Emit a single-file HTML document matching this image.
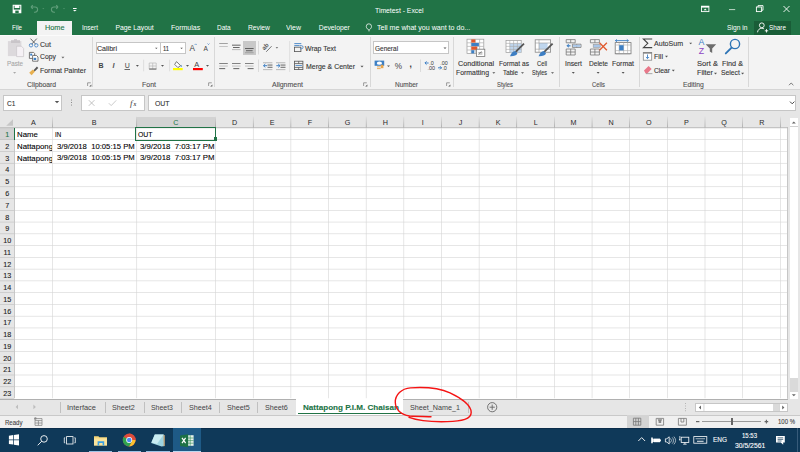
<!DOCTYPE html>
<html><head><meta charset="utf-8"><title>Timetest - Excel</title>
<style>
html,body{margin:0;padding:0;width:800px;height:452px;overflow:hidden;background:#fff}
body{position:relative;font-family:"Liberation Sans",sans-serif}
.r{position:absolute}
.t{position:absolute;white-space:nowrap;line-height:1;transform-origin:0 0;-webkit-text-stroke:0.1px currentColor}
.clip{position:absolute;overflow:hidden}
svg.ov{position:absolute;left:0;top:0}
</style></head><body>
<div class="r" style="left:0px;top:0px;width:800px;height:35px;background:#217346;"></div>
<div class="r" style="left:37px;top:20.5px;width:35px;height:14.5px;background:#f3f3f3;"></div>
<div class="r" style="left:753.5px;top:21px;width:37px;height:13.5px;background:#195d37;"></div>
<span class="t" style="left:375.00px;top:8.00px;font-size:6.8px;color:#ffffff;-webkit-text-stroke:0">Timetest - Excel</span>
<span class="t" style="left:12.00px;top:25.00px;font-size:6.8px;color:#ffffff;transform:scaleX(0.913);-webkit-text-stroke:0">File</span>
<span class="t" style="left:82.00px;top:25.00px;font-size:6.8px;color:#ffffff;transform:scaleX(0.941);-webkit-text-stroke:0">Insert</span>
<span class="t" style="left:115.50px;top:25.00px;font-size:6.8px;color:#ffffff;-webkit-text-stroke:0">Page Layout</span>
<span class="t" style="left:170.75px;top:25.00px;font-size:6.8px;color:#ffffff;transform:scaleX(1.032);-webkit-text-stroke:0">Formulas</span>
<span class="t" style="left:216.75px;top:25.00px;font-size:6.8px;color:#ffffff;transform:scaleX(0.954);-webkit-text-stroke:0">Data</span>
<span class="t" style="left:247.50px;top:25.00px;font-size:6.8px;color:#ffffff;transform:scaleX(0.983);-webkit-text-stroke:0">Review</span>
<span class="t" style="left:286.00px;top:25.00px;font-size:6.8px;color:#ffffff;transform:scaleX(1.021);-webkit-text-stroke:0">View</span>
<span class="t" style="left:318.75px;top:25.00px;font-size:6.8px;color:#ffffff;-webkit-text-stroke:0">Developer</span>
<span class="t" style="left:376.80px;top:25.00px;font-size:6.8px;color:#ffffff;transform:scaleX(1.041);-webkit-text-stroke:0">Tell me what you want to do...</span>
<span class="t" style="left:726.50px;top:25.00px;font-size:6.8px;color:#ffffff;transform:scaleX(0.985);-webkit-text-stroke:0">Sign in</span>
<span class="t" style="left:769.00px;top:25.00px;font-size:6.8px;color:#ffffff;transform:scaleX(0.936);-webkit-text-stroke:0">Share</span>
<span class="t" style="left:44.50px;top:25.00px;font-size:6.8px;color:#217346;transform:scaleX(1.074);">Home</span>
<div class="r" style="left:0px;top:35px;width:800px;height:54px;background:#f3f3f3;"></div>
<div class="r" style="left:0px;top:35px;width:800px;height:1px;background:#fbfbfb;"></div>
<div class="r" style="left:0px;top:88.5px;width:800px;height:1px;background:#d5d5d5;"></div>
<div class="r" style="left:92px;top:37px;width:0.8px;height:50px;background:#d8d8d8;"></div>
<div class="r" style="left:214.4px;top:37px;width:0.8px;height:50px;background:#d8d8d8;"></div>
<div class="r" style="left:369.9px;top:37px;width:0.8px;height:50px;background:#d8d8d8;"></div>
<div class="r" style="left:453px;top:37px;width:0.8px;height:50px;background:#d8d8d8;"></div>
<div class="r" style="left:558.6px;top:37px;width:0.8px;height:50px;background:#d8d8d8;"></div>
<div class="r" style="left:638.7px;top:37px;width:0.8px;height:50px;background:#d8d8d8;"></div>
<div class="r" style="left:748px;top:37px;width:0.8px;height:50px;background:#d8d8d8;"></div>
<span class="t" style="left:27.00px;top:82.00px;font-size:6.8px;color:#505050;">Clipboard</span>
<span class="t" style="left:142.00px;top:82.00px;font-size:6.8px;color:#505050;transform:scaleX(1.029);">Font</span>
<span class="t" style="left:272.00px;top:82.00px;font-size:6.8px;color:#505050;transform:scaleX(1.024);">Alignment</span>
<span class="t" style="left:395.00px;top:82.00px;font-size:6.8px;color:#505050;transform:scaleX(0.950);">Number</span>
<span class="t" style="left:497.00px;top:82.00px;font-size:6.8px;color:#505050;transform:scaleX(0.865);">Styles</span>
<span class="t" style="left:592.00px;top:82.00px;font-size:6.8px;color:#505050;transform:scaleX(0.861);">Cells</span>
<span class="t" style="left:683.00px;top:82.00px;font-size:6.8px;color:#505050;">Editing</span>
<span class="t" style="left:7.00px;top:61.00px;font-size:6.8px;color:#a6a6a6;transform:scaleX(0.919);">Paste</span>
<span class="t" style="left:40.00px;top:42.00px;font-size:6.8px;color:#333333;transform:scaleX(1.037);">Cut</span>
<span class="t" style="left:40.00px;top:54.00px;font-size:6.8px;color:#333333;">Copy</span>
<span class="t" style="left:40.00px;top:68.00px;font-size:6.8px;color:#333333;transform:scaleX(1.023);">Format Painter</span>
<div class="r" style="left:95.5px;top:41.6px;width:90.1px;height:12.9px;background:#fff;box-sizing:border-box;border:1px solid #c6c6c6"></div>
<div class="r" style="left:160.3px;top:42px;width:0.8px;height:12px;background:#c6c6c6;"></div>
<span class="t" style="left:97.00px;top:46.00px;font-size:6.8px;color:#333;transform:scaleX(1.039);">Calibri</span>
<span class="t" style="left:163.00px;top:46.00px;font-size:6.8px;color:#333;transform:scaleX(0.848);">11</span>
<div class="r" style="left:372.5px;top:41.3px;width:76.8px;height:13.2px;background:#fff;box-sizing:border-box;border:1px solid #c6c6c6"></div>
<span class="t" style="left:374.50px;top:46.00px;font-size:6.8px;color:#333;transform:scaleX(0.954);">General</span>
<span class="t" style="left:305.00px;top:46.00px;font-size:6.8px;color:#333333;transform:scaleX(1.020);">Wrap Text</span>
<span class="t" style="left:306.00px;top:64.00px;font-size:6.8px;color:#333333;transform:scaleX(1.021);">Merge &amp; Center</span>
<span class="t" style="left:458.00px;top:61.00px;font-size:6.8px;color:#333333;transform:scaleX(1.059);">Conditional</span>
<span class="t" style="left:456.00px;top:70.00px;font-size:6.8px;color:#333333;transform:scaleX(1.015);">Formatting</span>
<span class="t" style="left:499.00px;top:61.00px;font-size:6.8px;color:#333333;transform:scaleX(0.980);">Format as</span>
<span class="t" style="left:503.00px;top:70.00px;font-size:6.8px;color:#333333;transform:scaleX(0.923);">Table</span>
<span class="t" style="left:537.00px;top:61.00px;font-size:6.8px;color:#333333;transform:scaleX(0.855);">Cell</span>
<span class="t" style="left:532.00px;top:70.00px;font-size:6.8px;color:#333333;transform:scaleX(0.811);">Styles</span>
<span class="t" style="left:565.00px;top:61.00px;font-size:6.8px;color:#333333;">Insert</span>
<span class="t" style="left:589.00px;top:61.00px;font-size:6.8px;color:#333333;transform:scaleX(0.967);">Delete</span>
<span class="t" style="left:612.00px;top:61.00px;font-size:6.8px;color:#333333;transform:scaleX(1.021);">Format</span>
<span class="t" style="left:654.00px;top:41.00px;font-size:6.8px;color:#333333;transform:scaleX(1.038);">AutoSum</span>
<span class="t" style="left:654.00px;top:54.00px;font-size:6.8px;color:#333333;transform:scaleX(1.034);">Fill</span>
<span class="t" style="left:654.00px;top:68.00px;font-size:6.8px;color:#333333;transform:scaleX(0.984);">Clear</span>
<span class="t" style="left:697.00px;top:61.00px;font-size:6.8px;color:#333333;transform:scaleX(1.111);">Sort &amp;</span>
<span class="t" style="left:697.00px;top:70.00px;font-size:6.8px;color:#333333;transform:scaleX(1.060);">Filter</span>
<span class="t" style="left:722.00px;top:61.00px;font-size:6.8px;color:#333333;transform:scaleX(1.069);">Find &amp;</span>
<span class="t" style="left:721.00px;top:70.00px;font-size:6.8px;color:#333333;">Select</span>
<div class="r" style="left:243px;top:41px;width:13px;height:14px;background:#c8c8c8;"></div>
<div class="r" style="left:0px;top:89.5px;width:800px;height:38px;background:#e6e6e6;"></div>
<div class="r" style="left:3.3px;top:95px;width:59.2px;height:16px;background:#fff;box-sizing:border-box;border:1px solid #c6c6c6"></div>
<span class="t" style="left:7.00px;top:100.00px;font-size:7.5px;color:#333;transform:scaleX(0.885);">C1</span>
<div class="r" style="left:80.7px;top:95px;width:64.3px;height:16px;background:#fff;box-sizing:border-box;border:1px solid #c6c6c6"></div>
<div class="r" style="left:147.6px;top:95px;width:648.9px;height:16px;background:#fff;box-sizing:border-box;border:1px solid #c6c6c6"></div>
<span class="t" style="left:154.50px;top:100.00px;font-size:7.5px;color:#333;transform:scaleX(0.916);">OUT</span>
<div class="r" style="left:0px;top:128px;width:787.5px;height:270.48px;background:#fff;"></div>
<div class="r" style="left:0px;top:117px;width:788px;height:11px;background:#e6e6e6;"></div>
<div class="r" style="left:136px;top:117px;width:79.75px;height:11px;background:#d3d3d3;"></div>
<div class="r" style="left:0px;top:127.3px;width:788px;height:0.7px;background:#c8c8c8;"></div>
<div class="r" style="left:0px;top:128px;width:14.5px;height:270.48px;background:#e6e6e6;"></div>
<div class="r" style="left:0px;top:128px;width:14.5px;height:11.76px;background:#d3d3d3;"></div>
<svg class="ov" width="800" height="452" viewBox="0 0 800 452"><defs><linearGradient id="hdiv" x1="0" y1="0" x2="0" y2="1"><stop offset="0" stop-color="#dcdcdc"/><stop offset="1" stop-color="#8a8a8a"/></linearGradient></defs>
<rect x="0" y="139.412" width="14.118" height="0.588" fill="#bdbdbd"/>
<rect x="14.706" y="139.412" width="772.353" height="0.588" fill="#d4d4d4"/>
<rect x="0" y="151.176" width="14.118" height="0.588" fill="#bdbdbd"/>
<rect x="14.706" y="151.176" width="772.353" height="0.588" fill="#d4d4d4"/>
<rect x="0" y="162.941" width="14.118" height="0.588" fill="#bdbdbd"/>
<rect x="14.706" y="162.941" width="772.353" height="0.588" fill="#d4d4d4"/>
<rect x="0" y="174.706" width="14.118" height="0.588" fill="#bdbdbd"/>
<rect x="14.706" y="174.706" width="772.353" height="0.588" fill="#d4d4d4"/>
<rect x="0" y="186.471" width="14.118" height="0.588" fill="#bdbdbd"/>
<rect x="14.706" y="186.471" width="772.353" height="0.588" fill="#d4d4d4"/>
<rect x="0" y="198.235" width="14.118" height="0.588" fill="#bdbdbd"/>
<rect x="14.706" y="198.235" width="772.353" height="0.588" fill="#d4d4d4"/>
<rect x="0" y="210.000" width="14.118" height="0.588" fill="#bdbdbd"/>
<rect x="14.706" y="210.000" width="772.353" height="0.588" fill="#d4d4d4"/>
<rect x="0" y="221.765" width="14.118" height="0.588" fill="#bdbdbd"/>
<rect x="14.706" y="221.765" width="772.353" height="0.588" fill="#d4d4d4"/>
<rect x="0" y="233.529" width="14.118" height="0.588" fill="#bdbdbd"/>
<rect x="14.706" y="233.529" width="772.353" height="0.588" fill="#d4d4d4"/>
<rect x="0" y="245.294" width="14.118" height="0.588" fill="#bdbdbd"/>
<rect x="14.706" y="245.294" width="772.353" height="0.588" fill="#d4d4d4"/>
<rect x="0" y="257.059" width="14.118" height="0.588" fill="#bdbdbd"/>
<rect x="14.706" y="257.059" width="772.353" height="0.588" fill="#d4d4d4"/>
<rect x="0" y="268.824" width="14.118" height="0.588" fill="#bdbdbd"/>
<rect x="14.706" y="268.824" width="772.353" height="0.588" fill="#d4d4d4"/>
<rect x="0" y="280.588" width="14.118" height="0.588" fill="#bdbdbd"/>
<rect x="14.706" y="280.588" width="772.353" height="0.588" fill="#d4d4d4"/>
<rect x="0" y="292.353" width="14.118" height="0.588" fill="#bdbdbd"/>
<rect x="14.706" y="292.353" width="772.353" height="0.588" fill="#d4d4d4"/>
<rect x="0" y="304.118" width="14.118" height="0.588" fill="#bdbdbd"/>
<rect x="14.706" y="304.118" width="772.353" height="0.588" fill="#d4d4d4"/>
<rect x="0" y="315.882" width="14.118" height="0.588" fill="#bdbdbd"/>
<rect x="14.706" y="315.882" width="772.353" height="0.588" fill="#d4d4d4"/>
<rect x="0" y="327.647" width="14.118" height="0.588" fill="#bdbdbd"/>
<rect x="14.706" y="327.647" width="772.353" height="0.588" fill="#d4d4d4"/>
<rect x="0" y="339.412" width="14.118" height="0.588" fill="#bdbdbd"/>
<rect x="14.706" y="339.412" width="772.353" height="0.588" fill="#d4d4d4"/>
<rect x="0" y="351.176" width="14.118" height="0.588" fill="#bdbdbd"/>
<rect x="14.706" y="351.176" width="772.353" height="0.588" fill="#d4d4d4"/>
<rect x="0" y="362.941" width="14.118" height="0.588" fill="#bdbdbd"/>
<rect x="14.706" y="362.941" width="772.353" height="0.588" fill="#d4d4d4"/>
<rect x="0" y="374.706" width="14.118" height="0.588" fill="#bdbdbd"/>
<rect x="14.706" y="374.706" width="772.353" height="0.588" fill="#d4d4d4"/>
<rect x="0" y="386.471" width="14.118" height="0.588" fill="#bdbdbd"/>
<rect x="14.706" y="386.471" width="772.353" height="0.588" fill="#d4d4d4"/>
<rect x="0" y="398.235" width="14.118" height="0.588" fill="#bdbdbd"/>
<rect x="52.353" y="128.235" width="0.588" height="270.000" fill="#d4d4d4"/>
<rect x="52.353" y="116.471" width="0.588" height="11.176" fill="url(#hdiv)"/>
<rect x="136.471" y="128.235" width="0.588" height="270.000" fill="#d4d4d4"/>
<rect x="136.471" y="116.471" width="0.588" height="11.176" fill="url(#hdiv)"/>
<rect x="215.294" y="128.235" width="0.588" height="270.000" fill="#d4d4d4"/>
<rect x="215.294" y="116.471" width="0.588" height="11.176" fill="url(#hdiv)"/>
<rect x="252.941" y="128.235" width="0.588" height="270.000" fill="#d4d4d4"/>
<rect x="252.941" y="116.471" width="0.588" height="11.176" fill="url(#hdiv)"/>
<rect x="290.588" y="128.235" width="0.588" height="270.000" fill="#d4d4d4"/>
<rect x="290.588" y="116.471" width="0.588" height="11.176" fill="url(#hdiv)"/>
<rect x="328.235" y="128.235" width="0.588" height="270.000" fill="#d4d4d4"/>
<rect x="328.235" y="116.471" width="0.588" height="11.176" fill="url(#hdiv)"/>
<rect x="365.882" y="128.235" width="0.588" height="270.000" fill="#d4d4d4"/>
<rect x="365.882" y="116.471" width="0.588" height="11.176" fill="url(#hdiv)"/>
<rect x="403.529" y="128.235" width="0.588" height="270.000" fill="#d4d4d4"/>
<rect x="403.529" y="116.471" width="0.588" height="11.176" fill="url(#hdiv)"/>
<rect x="441.176" y="128.235" width="0.588" height="270.000" fill="#d4d4d4"/>
<rect x="441.176" y="116.471" width="0.588" height="11.176" fill="url(#hdiv)"/>
<rect x="478.824" y="128.235" width="0.588" height="270.000" fill="#d4d4d4"/>
<rect x="478.824" y="116.471" width="0.588" height="11.176" fill="url(#hdiv)"/>
<rect x="516.471" y="128.235" width="0.588" height="270.000" fill="#d4d4d4"/>
<rect x="516.471" y="116.471" width="0.588" height="11.176" fill="url(#hdiv)"/>
<rect x="554.118" y="128.235" width="0.588" height="270.000" fill="#d4d4d4"/>
<rect x="554.118" y="116.471" width="0.588" height="11.176" fill="url(#hdiv)"/>
<rect x="591.765" y="128.235" width="0.588" height="270.000" fill="#d4d4d4"/>
<rect x="591.765" y="116.471" width="0.588" height="11.176" fill="url(#hdiv)"/>
<rect x="629.412" y="128.235" width="0.588" height="270.000" fill="#d4d4d4"/>
<rect x="629.412" y="116.471" width="0.588" height="11.176" fill="url(#hdiv)"/>
<rect x="667.059" y="128.235" width="0.588" height="270.000" fill="#d4d4d4"/>
<rect x="667.059" y="116.471" width="0.588" height="11.176" fill="url(#hdiv)"/>
<rect x="704.706" y="128.235" width="0.588" height="270.000" fill="#d4d4d4"/>
<rect x="704.706" y="116.471" width="0.588" height="11.176" fill="url(#hdiv)"/>
<rect x="742.353" y="128.235" width="0.588" height="270.000" fill="#d4d4d4"/>
<rect x="742.353" y="116.471" width="0.588" height="11.176" fill="url(#hdiv)"/>
<rect x="780.000" y="128.235" width="0.588" height="270.000" fill="#d4d4d4"/>
<rect x="780.000" y="116.471" width="0.588" height="11.176" fill="url(#hdiv)"/>
<rect x="0" y="127.647" width="787.647" height="0.588" fill="#bdbdbd"/>
<rect x="14.118" y="127.647" width="0.706" height="270.588" fill="#bcbcbc"/>
<rect x="787.059" y="127.647" width="0.588" height="271.176" fill="#9f9f9f"/>
</svg>
<div class="r" style="left:13.8px;top:128px;width:1.3px;height:11.76px;background:#217346;"></div>
<span class="t" style="left:30.96px;top:119.00px;font-size:7.2px;color:#2a2a2a;-webkit-text-stroke:0">A</span>
<span class="t" style="left:91.71px;top:119.00px;font-size:7.2px;color:#2a2a2a;-webkit-text-stroke:0">B</span>
<span class="t" style="left:173.28px;top:119.00px;font-size:7.2px;color:#217346;-webkit-text-stroke:0">C</span>
<span class="t" style="left:231.99px;top:119.00px;font-size:7.2px;color:#2a2a2a;-webkit-text-stroke:0">D</span>
<span class="t" style="left:269.83px;top:119.00px;font-size:7.2px;color:#2a2a2a;-webkit-text-stroke:0">E</span>
<span class="t" style="left:307.70px;top:119.00px;font-size:7.2px;color:#2a2a2a;-webkit-text-stroke:0">F</span>
<span class="t" style="left:344.75px;top:119.00px;font-size:7.2px;color:#2a2a2a;-webkit-text-stroke:0">G</span>
<span class="t" style="left:382.63px;top:119.00px;font-size:7.2px;color:#2a2a2a;-webkit-text-stroke:0">H</span>
<span class="t" style="left:421.87px;top:119.00px;font-size:7.2px;color:#2a2a2a;-webkit-text-stroke:0">I</span>
<span class="t" style="left:458.74px;top:119.00px;font-size:7.2px;color:#2a2a2a;-webkit-text-stroke:0">J</span>
<span class="t" style="left:495.79px;top:119.00px;font-size:7.2px;color:#2a2a2a;-webkit-text-stroke:0">K</span>
<span class="t" style="left:533.84px;top:119.00px;font-size:7.2px;color:#2a2a2a;-webkit-text-stroke:0">L</span>
<span class="t" style="left:570.53px;top:119.00px;font-size:7.2px;color:#2a2a2a;-webkit-text-stroke:0">M</span>
<span class="t" style="left:608.59px;top:119.00px;font-size:7.2px;color:#2a2a2a;-webkit-text-stroke:0">N</span>
<span class="t" style="left:646.03px;top:119.00px;font-size:7.2px;color:#2a2a2a;-webkit-text-stroke:0">O</span>
<span class="t" style="left:684.09px;top:119.00px;font-size:7.2px;color:#2a2a2a;-webkit-text-stroke:0">P</span>
<span class="t" style="left:721.35px;top:119.00px;font-size:7.2px;color:#2a2a2a;-webkit-text-stroke:0">Q</span>
<span class="t" style="left:759.23px;top:119.00px;font-size:7.2px;color:#2a2a2a;-webkit-text-stroke:0">R</span>
<span class="t" style="left:5.23px;top:131.00px;font-size:7.2px;color:#217346;">1</span>
<span class="t" style="left:5.23px;top:143.00px;font-size:7.2px;color:#1a1a1a;">2</span>
<span class="t" style="left:5.23px;top:155.00px;font-size:7.2px;color:#1a1a1a;">3</span>
<span class="t" style="left:5.23px;top:166.00px;font-size:7.2px;color:#1a1a1a;">4</span>
<span class="t" style="left:5.23px;top:178.00px;font-size:7.2px;color:#1a1a1a;">5</span>
<span class="t" style="left:5.23px;top:190.00px;font-size:7.2px;color:#1a1a1a;">6</span>
<span class="t" style="left:5.23px;top:202.00px;font-size:7.2px;color:#1a1a1a;">7</span>
<span class="t" style="left:5.23px;top:214.00px;font-size:7.2px;color:#1a1a1a;">8</span>
<span class="t" style="left:5.23px;top:225.00px;font-size:7.2px;color:#1a1a1a;">9</span>
<span class="t" style="left:3.25px;top:237.00px;font-size:7.2px;color:#1a1a1a;">10</span>
<span class="t" style="left:3.51px;top:249.00px;font-size:7.2px;color:#1a1a1a;">11</span>
<span class="t" style="left:3.25px;top:261.00px;font-size:7.2px;color:#1a1a1a;">12</span>
<span class="t" style="left:3.25px;top:272.00px;font-size:7.2px;color:#1a1a1a;">13</span>
<span class="t" style="left:3.25px;top:284.00px;font-size:7.2px;color:#1a1a1a;">14</span>
<span class="t" style="left:3.25px;top:296.00px;font-size:7.2px;color:#1a1a1a;">15</span>
<span class="t" style="left:3.25px;top:308.00px;font-size:7.2px;color:#1a1a1a;">16</span>
<span class="t" style="left:3.25px;top:319.00px;font-size:7.2px;color:#1a1a1a;">17</span>
<span class="t" style="left:3.25px;top:331.00px;font-size:7.2px;color:#1a1a1a;">18</span>
<span class="t" style="left:3.25px;top:343.00px;font-size:7.2px;color:#1a1a1a;">19</span>
<span class="t" style="left:3.25px;top:355.00px;font-size:7.2px;color:#1a1a1a;">20</span>
<span class="t" style="left:3.25px;top:366.00px;font-size:7.2px;color:#1a1a1a;">21</span>
<span class="t" style="left:3.25px;top:378.00px;font-size:7.2px;color:#1a1a1a;">22</span>
<span class="t" style="left:3.25px;top:390.00px;font-size:7.2px;color:#1a1a1a;">23</span>
<span class="t" style="left:17.00px;top:131.00px;font-size:7.8px;color:#000;">Name</span>
<span class="t" style="left:54.75px;top:131.00px;font-size:7.8px;color:#000;transform:scaleX(0.801);">IN</span>
<span class="t" style="left:138.00px;top:131.00px;font-size:7.8px;color:#000;transform:scaleX(0.881);">OUT</span>
<div class="clip" style="left:15px;top:139.76px;width:37px;height:11.76px">
<span class="t" style="left:2.00px;top:3.00px;font-size:7.8px;color:#000;">Nattapong</span>
</div>
<span class="t" style="left:56.50px;top:143.00px;font-size:7.8px;color:#000;transform:scaleX(0.985);">3/9/2018&nbsp;&nbsp;10:05:15 PM</span>
<span class="t" style="left:140.00px;top:143.00px;font-size:7.8px;color:#000;">3/9/2018&nbsp;&nbsp;7:03:17 PM</span>
<div class="clip" style="left:15px;top:151.52px;width:37px;height:11.76px">
<span class="t" style="left:2.00px;top:3.00px;font-size:7.8px;color:#000;">Nattapong</span>
</div>
<span class="t" style="left:56.50px;top:154.00px;font-size:7.8px;color:#000;transform:scaleX(0.985);">3/9/2018&nbsp;&nbsp;10:05:15 PM</span>
<span class="t" style="left:140.00px;top:154.00px;font-size:7.8px;color:#000;">3/9/2018&nbsp;&nbsp;7:03:17 PM</span>
<div class="r" style="left:135.2px;top:127.2px;width:81px;height:13.4px;background:transparent;box-sizing:border-box;border:1.3px solid #217346"></div>
<div class="r" style="left:213.6px;top:137.4px;width:3.8px;height:3.8px;background:#217346;"></div>
<div class="r" style="left:788px;top:117px;width:12px;height:298.48px;background:#e6e6e6;"></div>
<div class="r" style="left:789.8px;top:118px;width:7.8px;height:260px;background:#fff;"></div>
<div class="r" style="left:789.8px;top:126.3px;width:7.8px;height:0.6px;background:#d0d0d0;"></div>
<div class="r" style="left:789.8px;top:378px;width:7.8px;height:13.6px;background:#dadada;"></div>
<div class="r" style="left:789.8px;top:391.6px;width:7.8px;height:7.6px;background:#fff;"></div>
<div class="r" style="left:0px;top:399px;width:800px;height:16.5px;background:#e6e6e6;"></div>
<div class="r" style="left:0px;top:399px;width:788px;height:1px;background:#b0b0b0;"></div>
<div class="r" style="left:0px;top:415px;width:800px;height:0.9px;background:#c9c9c9;"></div>
<div class="r" style="left:60px;top:402px;width:0.8px;height:11px;background:#c0c0c0;"></div>
<div class="r" style="left:105px;top:402px;width:0.8px;height:11px;background:#c0c0c0;"></div>
<div class="r" style="left:143.6px;top:402px;width:0.8px;height:11px;background:#c0c0c0;"></div>
<div class="r" style="left:181.4px;top:402px;width:0.8px;height:11px;background:#c0c0c0;"></div>
<div class="r" style="left:219.4px;top:402px;width:0.8px;height:11px;background:#c0c0c0;"></div>
<div class="r" style="left:257.4px;top:402px;width:0.8px;height:11px;background:#c0c0c0;"></div>
<div class="r" style="left:467.5px;top:402px;width:0.8px;height:11px;background:#c0c0c0;"></div>
<span class="t" style="left:67.00px;top:404.00px;font-size:7.2px;color:#444;transform:scaleX(1.035);-webkit-text-stroke:0">Interface</span>
<span class="t" style="left:112.00px;top:404.00px;font-size:7.2px;color:#444;-webkit-text-stroke:0">Sheet2</span>
<span class="t" style="left:151.00px;top:404.00px;font-size:7.2px;color:#444;transform:scaleX(0.964);-webkit-text-stroke:0">Sheet3</span>
<span class="t" style="left:189.00px;top:404.00px;font-size:7.2px;color:#444;-webkit-text-stroke:0">Sheet4</span>
<span class="t" style="left:227.00px;top:404.00px;font-size:7.2px;color:#444;-webkit-text-stroke:0">Sheet5</span>
<span class="t" style="left:265.00px;top:404.00px;font-size:7.2px;color:#444;-webkit-text-stroke:0">Sheet6</span>
<span class="t" style="left:410.00px;top:404.00px;font-size:7.2px;color:#444;-webkit-text-stroke:0">Sheet_Name_1</span>
<div class="r" style="left:296px;top:399px;width:106.6px;height:15.5px;background:#fff;"></div>
<div class="clip" style="left:296px;top:399px;width:106px;height:16px">
<span class="t" style="left:7.00px;top:5.00px;font-size:7.6px;color:#217346;font-weight:bold;transform:scaleX(1.064);">Nattapong P.I.M. Chaisan</span>
</div>
<div class="r" style="left:298px;top:413px;width:104px;height:1.2px;background:#217346;"></div>
<div class="r" style="left:695px;top:403.4px;width:92.5px;height:8.4px;background:#fff;box-sizing:border-box;border:0.8px solid #c6c6c6"></div>
<div class="r" style="left:773px;top:404px;width:6px;height:7.4px;background:#dadada;"></div>
<div class="r" style="left:0px;top:415.9px;width:800px;height:11.9px;background:#f0f0f0;"></div>
<span class="t" style="left:4.50px;top:420.00px;font-size:6.8px;color:#444;transform:scaleX(0.890);">Ready</span>
<div class="r" style="left:626.5px;top:415.4px;width:22.25px;height:12.4px;background:#d4d4d4;"></div>
<span class="t" style="left:778.00px;top:419.00px;font-size:6.8px;color:#444;transform:scaleX(0.880);">100 %</span>
<div class="r" style="left:702px;top:421.2px;width:59px;height:0.7px;background:#9a9a9a;"></div>
<div class="r" style="left:731px;top:418px;width:2.2px;height:7px;background:#666;"></div>
<div class="r" style="left:0px;top:427.8px;width:800px;height:24.2px;background:#0f3959;"></div>
<div class="r" style="left:0px;top:427.8px;width:800px;height:1.4px;background:#0c2d4b;"></div>
<div class="r" style="left:173.2px;top:427.8px;width:27.8px;height:24.2px;background:#1e5a86;"></div>
<span class="t" style="left:713.00px;top:436.00px;font-size:7px;color:#fff;transform:scaleX(0.922);">ENG</span>
<span class="t" style="left:742.00px;top:433.00px;font-size:6.8px;color:#fff;transform:scaleX(0.882);">15:53</span>
<span class="t" style="left:735.00px;top:443.00px;font-size:6.8px;color:#fff;">30/5/2561</span>
<svg class="ov" width="800" height="452" viewBox="0 0 800 452">
<!-- title bar -->
<g fill="none" stroke="#fff">
  <path d="M13.2 5.2 h7.6 v7.6 h-7.6 z" stroke-width="1.1"/>
  <rect x="14.6" y="5" width="4.8" height="3" fill="#fff" stroke="none"/>
  <rect x="13" y="9.6" width="8" height="3.4" fill="#fff" stroke="none"/>
  <rect x="15.3" y="10.6" width="3.4" height="2.4" fill="#217346" stroke="none"/>
</g>
<g fill="none" stroke="#5f9d79" stroke-width="1.1">
  <path d="M31 7 l1.8 -1.8 M31 7 l1.8 1.8 M31 7 h4 a2.6 2.6 0 0 1 0 5.2 h-1"/>
  <path d="M58 7 l-1.8 -1.8 M58 7 l-1.8 1.8 M58 7 h-4 a2.6 2.6 0 0 0 0 5.2 h1"/>
</g>
<path d="M42.3 8.2 h2 l-1 1.1z M63 8.2 h2 l-1 1.1z" fill="#5f9d79"/>
<g fill="#fff">
  <rect x="73" y="8" width="3.6" height="1"/>
  <path d="M73 10 h3.6 l-1.8 1.6z"/>
</g>
<!-- window controls -->
<g fill="none" stroke="#fff" stroke-width="0.9">
  <rect x="701.5" y="6.2" width="7.4" height="5.4"/>
  <path d="M701.5 6.8 h7.4" stroke-width="1.6"/>
  <path d="M703.6 10.2 l1.6 -1.6 l1.6 1.6z" fill="#fff" stroke="none"/>
  <path d="M729 9.6 h6.2" stroke="#cfe1d6"/>
  <rect x="756.4" y="7" width="5" height="4.6"/>
  <path d="M758 7 v-1.4 h5 v4.6 h-1.6"/>
  <path d="M783.5 6 l6 6 M789.5 6 l-6 6"/>
</g>
<!-- tell me bulb -->
<g fill="none" stroke="#fff" stroke-width="0.75">
  <path d="M368.2 29.6 c-1.3 -1 -1.9 -2 -1.9 -3.2 a2.6 2.6 0 0 1 5.2 0 c0 1.2 -0.6 2.2 -1.9 3.2 z"/>
  <path d="M368.3 30.8 h1.4"/>
</g>
<!-- share person -->
<g fill="none" stroke="#fff" stroke-width="0.9">
  <circle cx="761.8" cy="25.3" r="2.4"/>
  <path d="M757.5 32.3 c0.4 -2.6 2 -4 4.3 -4 c1 0 1.7 0.2 2.3 0.6"/>
  <path d="M764.8 30.8 h3.4 M766.5 29.1 v3.4"/>
</g>
<!-- ===== Clipboard ===== -->
<rect x="7.9" y="41.1" width="13.5" height="15" fill="#dcd9dc"/>
<path d="M11 40.2 h9 v2.8 h-9z" fill="#c9c5c9"/>
<path d="M14 39.2 h3 v1.5 h-3z" fill="#c9c5c9"/>
<path d="M16.6 46.2 h4.8 l2.2 2.2 v8.2 h-7z" fill="#f5f1f5" stroke="#cdc8cd" stroke-width="0.8"/>
<path d="M13.1 72.1 h3 l-1.5 1.6z" fill="#a8a8a8"/>
<!-- cut -->
<g fill="none" stroke-width="0.9">
  <path d="M30.5 38.6 L35.8 44.3 M36.8 38.6 L31.5 44.3" stroke="#555"/>
  <circle cx="31" cy="45.3" r="1.7" stroke="#4a86c6"/>
  <circle cx="36.3" cy="45.3" r="1.7" stroke="#4a86c6"/>
</g>
<!-- copy -->
<g stroke="#555" stroke-width="0.8">
  <path d="M29.4 52.4 h4.2 l1 1 v5 h-5.2z" fill="#fff"/>
  <path d="M32.6 55.4 h3.8 l1.6 1.6 v4.2 h-5.4z" fill="#fff"/>
</g>
<rect x="30.2" y="53.6" width="2" height="2" fill="#3d7fc4"/>
<rect x="33.6" y="57.8" width="2.6" height="2.2" fill="#3d7fc4"/>
<path d="M61.4 56.8 h3 l-1.5 1.6z" fill="#666"/>
<!-- format painter -->
<path d="M33.5 70.2 l3.4 -3.6 l1.4 1.4 l-3.6 3.4z" fill="#555"/>
<path d="M29.2 72.8 l3.6 -3.4 l2.2 2.2 l-3.4 3.6 z" fill="#e7b050"/>
<!-- launchers -->
<g fill="none" stroke="#777" stroke-width="0.7">
  <path d="M87.6 86 v-3.2 h3.2"/><path d="M208.6 86 v-3.2 h3.2"/><path d="M363.6 86 v-3.2 h3.2"/><path d="M446.6 86 v-3.2 h3.2"/>
</g>
<g fill="#555">
  <path d="M89.2 86.6 h2.2 v-2.2z"/><path d="M210.2 86.6 h2.2 v-2.2z"/><path d="M365.2 86.6 h2.2 v-2.2z"/><path d="M448.2 86.6 h2.2 v-2.2z"/>
</g>
<!-- ===== Font ===== -->
<path d="M155 47.7 h2.6 l-1.3 1.3z M180.3 47.7 h2.6 l-1.3 1.3z" fill="#555"/>
<text x="189.5" y="51.4" font-size="8.2" fill="#444" font-family="Liberation Sans">A</text>
<path d="M194.8 44.8 l0.9 -0.9 l0.9 0.9" stroke="#3d7fc4" stroke-width="0.8" fill="none"/>
<text x="203.4" y="51.4" font-size="6.6" fill="#444" font-family="Liberation Sans">A</text>
<path d="M207.6 43.6 l0.9 0.9 l0.9 -0.9" stroke="#3d7fc4" stroke-width="0.8" fill="none"/>
<text x="98.6" y="68.2" font-size="7" font-weight="bold" fill="#444" font-family="Liberation Sans">B</text>
<text x="112.4" y="68.3" font-size="7.4" font-style="italic" font-weight="bold" fill="#555" font-family="Liberation Sans">I</text>
<text x="124.7" y="68.2" font-size="7" fill="#444" font-family="Liberation Sans">U</text>
<rect x="124.5" y="69" width="5.5" height="0.8" fill="#444"/>
<path d="M135.9 65.1 h3 l-1.5 1.6z M161.0 65.1 h3 l-1.5 1.6z M186.0 65.1 h3 l-1.5 1.6z M206.0 65.1 h3 l-1.5 1.6z" fill="#555"/>
<rect x="143.4" y="59.7" width="0.7" height="11.6" fill="#d4d4d4"/>
<rect x="169.4" y="59.7" width="0.7" height="11.6" fill="#d4d4d4"/>
<g fill="none" stroke="#b8b8b8" stroke-width="0.7">
  <path d="M149.2 63 h7 v6 h-7z M152.7 63 v6 M149.2 66 h7"/>
</g>
<rect x="149.2" y="68.6" width="7.2" height="0.9" fill="#555"/>
<!-- fill color -->
<path d="M176.5 61.6 l4 4 l-2.6 2 l-3.2 -3.2z" fill="#fff" stroke="#555" stroke-width="0.8"/>
<path d="M181 64.8 l1.2 1.6 l-1.6 0.4z" fill="#3d7fc4"/>
<rect x="173" y="68" width="9.7" height="2.2" fill="#ffff00"/>
<text x="194.2" y="67.4" font-size="7.4" fill="#444" font-family="Liberation Sans">A</text>
<rect x="193" y="68" width="9.8" height="2.2" fill="#ff0000"/>
<!-- ===== Alignment ===== -->
<g fill="#9a9a9a">
  <rect x="219.2" y="43.1" width="8.6" height="0.9"/>
  <rect x="219.2" y="46" width="8.6" height="0.9" fill="#c0c0c0"/>
  <rect x="232" y="44.7" width="8.6" height="0.9" fill="#555"/>
  <rect x="233" y="47.1" width="6.6" height="0.9" fill="#555"/>
  <rect x="232" y="49.2" width="8.6" height="0.9" fill="#b4b4b4"/>
  <rect x="245" y="48" width="8.6" height="0.9" fill="#555"/>
  <rect x="246" y="50.3" width="6.6" height="0.9" fill="#555"/>
  <rect x="245" y="52.3" width="8.6" height="0.9" fill="#9c9c9c"/>
</g>
<g fill="#555">
  <rect x="219.2" y="63" width="8.6" height="0.9" fill="#777"/>
  <rect x="219.2" y="65.6" width="8.6" height="0.9" fill="#bbb"/>
  <rect x="219.2" y="68.2" width="6" height="0.9"/>
  <rect x="232" y="63" width="8.6" height="0.9" fill="#777"/>
  <rect x="232" y="65.6" width="8.6" height="0.9" fill="#bbb"/>
  <rect x="233.3" y="68.2" width="6" height="0.9"/>
  <rect x="245" y="63" width="8.6" height="0.9" fill="#777"/>
  <rect x="245" y="65.6" width="8.6" height="0.9" fill="#bbb"/>
  <rect x="247.6" y="68.2" width="6" height="0.9"/>
</g>
<rect x="258.2" y="41" width="0.7" height="13.5" fill="#d0d0d0"/>
<rect x="258.2" y="59.5" width="0.7" height="12.5" fill="#d0d0d0"/>
<rect x="289.4" y="41" width="0.7" height="31" fill="#d8d8d8"/>
<!-- orientation -->
<text x="0" y="0" font-size="6" fill="#555" font-family="Liberation Sans" font-weight="bold" transform="translate(264.2 50.4) rotate(-45)">ab</text>
<path d="M271.6 46.2 l-5.4 5.6" stroke="#555" stroke-width="0.8"/>
<path d="M275.6 47.2 h2.6 l-1.3 1.3z" fill="#555"/>
<!-- indent -->
<g fill="#555">
  <rect x="263" y="62.4" width="9.4" height="0.8" fill="#aaa"/>
  <rect x="267.5" y="64.6" width="5" height="0.9"/>
  <rect x="267.5" y="66.8" width="5" height="0.9"/>
  <rect x="263" y="69.3" width="9.4" height="0.8" fill="#aaa"/>
  <rect x="276" y="62.4" width="9.4" height="0.8" fill="#aaa"/>
  <rect x="280.5" y="64.6" width="5" height="0.9"/>
  <rect x="280.5" y="66.8" width="5" height="0.9"/>
  <rect x="276" y="69.3" width="9.4" height="0.8" fill="#aaa"/>
</g>
<g fill="none" stroke="#3d7fc4" stroke-width="1">
  <path d="M263.5 65.7 h3.6 M265.3 64 l-1.8 1.7 l1.8 1.7"/>
  <path d="M276.3 65.7 h3.6 M278.2 64 l1.8 1.7 l-1.8 1.7"/>
</g>
<!-- wrap text -->
<g>
  <rect x="294.3" y="43.2" width="7" height="0.9" fill="#3d7fc4"/>
  <rect x="294.3" y="45.2" width="5" height="0.9" fill="#3d7fc4"/>
  <rect x="294.5" y="47.2" width="6.4" height="4.4" fill="none" stroke="#555" stroke-width="0.8"/>
  <path d="M299.5 45.6 h2 a1.6 1.6 0 0 1 0 3.2 h-1.4" fill="none" stroke="#3d7fc4" stroke-width="0.8"/>
</g>
<!-- merge -->
<g fill="none" stroke="#555" stroke-width="0.8">
  <rect x="294.5" y="61.2" width="8.4" height="8.4"/>
  <path d="M294.5 63.6 h8.4 M294.5 67.4 h8.4 M298.7 61.2 v2.4 M298.7 67.4 v2.2"/>
</g>
<rect x="295.5" y="65.1" width="6.4" height="0.8" fill="#3d7fc4"/>
<path d="M360.5 65.8 h3 l-1.5 1.6z" fill="#555"/>
<!-- ===== Number ===== -->
<path d="M443.5 47.4 h3 l-1.5 1.6z" fill="#555"/>
<rect x="374.6" y="60.6" width="9.6" height="5.2" fill="#3d7fc4"/>
<ellipse cx="379.4" cy="63.2" rx="2.6" ry="1.6" fill="#fff"/>
<g fill="#e7a44c">
  <rect x="377" y="66.4" width="3.6" height="0.9"/>
  <rect x="377" y="68.2" width="3.6" height="0.9"/>
  <rect x="380.8" y="64.8" width="2.6" height="3.4"/>
</g>
<path d="M387.0 65.4 h3 l-1.5 1.6z" fill="#555"/>
<text x="394.8" y="68.6" font-size="8.2" fill="#444" font-family="Liberation Sans">%</text>
<text x="409.4" y="67.4" font-size="8.4" fill="#333" font-family="Liberation Sans" font-weight="bold">,</text>
<rect x="420.3" y="59.5" width="0.7" height="12.5" fill="#d0d0d0"/>
<text x="429.2" y="64.6" font-size="5.4" fill="#333" font-family="Liberation Sans">.0</text>
<text x="427.6" y="69.8" font-size="5.4" fill="#333" font-family="Liberation Sans">.00</text>
<path d="M425 63 h3.6 M426.5 61.4 l-1.6 1.6 l1.6 1.6" stroke="#3d7fc4" stroke-width="1" fill="none"/>
<text x="440.2" y="64.6" font-size="5.4" fill="#333" font-family="Liberation Sans">.00</text>
<text x="442.2" y="69.8" font-size="5.4" fill="#333" font-family="Liberation Sans">.0</text>
<path d="M438 67.8 h3.6 M440 66.2 l1.6 1.6 l-1.6 1.6" stroke="#3d7fc4" stroke-width="1" fill="none"/>
<!-- ===== Styles ===== -->
<g>
  <rect x="467" y="39.2" width="16.8" height="14.4" fill="#fff" stroke="#999" stroke-width="0.7"/>
  <path d="M467 42.8 h16.8 M467 46.4 h16.8 M467 50 h16.8 M471.2 39.2 v14.4 M475.4 39.2 v14.4 M479.6 39.2 v14.4" stroke="#b0b0b0" stroke-width="0.7" fill="none"/>
  <rect x="471.3" y="39.4" width="4" height="3.2" fill="#e1582c"/>
  <rect x="471.3" y="43" width="7.6" height="3.2" fill="#3d7fc4"/>
  <rect x="471.3" y="46.6" width="6" height="3.2" fill="#e1582c"/>
  <rect x="471.3" y="50.2" width="3" height="3.2" fill="#3d7fc4"/>
  <rect x="476.4" y="49.2" width="8.4" height="7.2" fill="#fff" stroke="#777" stroke-width="0.8"/>
  <path d="M478.6 54.6 l3 -3.4 M478.4 52.6 h4 M478.4 54 h4" stroke="#666" stroke-width="0.6" fill="none"/>
</g>
<path d="M492.3 72.2 h3 l-1.5 1.6z M521 72.2 h3 l-1.5 1.6z M551 72.2 h3 l-1.5 1.6z" fill="#555"/>
<g>
  <rect x="506" y="40.4" width="15.2" height="12" fill="#fff" stroke="#999" stroke-width="0.7"/>
  <rect x="509.8" y="43.4" width="11.4" height="9" fill="#bfd6ee"/>
  <path d="M506 43.4 h15.2 M506 46.4 h15.2 M506 49.4 h15.2 M509.8 40.4 v12 M513.6 40.4 v12 M517.4 40.4 v12" stroke="#a8a8a8" stroke-width="0.6" fill="none"/>
  <path d="M524 43.6 l-8.6 8.6" stroke="#555" stroke-width="1.8"/>
  <path d="M510 56.2 c1 -3 3 -5 5.2 -5.2 l2.2 2.2 c-0.6 2.4 -4 3.2 -7.4 3z" fill="#3d7fc4"/>
</g>
<g>
  <rect x="535.2" y="39.8" width="15.4" height="12.4" fill="#fff" stroke="#888" stroke-width="0.8"/>
  <rect x="539" y="43" width="8.6" height="6.2" fill="#bfd6ee"/>
  <path d="M535.2 43 h15.4 M535.2 49.2 h15.4 M539 39.8 v12.4" stroke="#999" stroke-width="0.6" fill="none"/>
  <path d="M552.6 43.6 l-8.6 8.6" stroke="#555" stroke-width="1.8"/>
  <path d="M538.6 56.2 c1 -3 3 -5 5.2 -5.2 l2.2 2.2 c-0.6 2.4 -4 3.2 -7.4 3z" fill="#3d7fc4"/>
</g>
<!-- ===== Cells ===== -->
<g fill="none" stroke="#777" stroke-width="0.8">
  <path d="M566.2 39.6 h9 v3.2 h-9z M570.7 39.6 v3.2"/>
  <path d="M572.4 44.2 h8.6 v3.2 h-8.6z M576.7 44.2 v3.2"/>
  <path d="M566.2 49 h9 v6 h-9z M570.7 49 v6 M566.2 52 h9"/>
  <path d="M590.4 39.6 h9 v3.2 h-9z M594.9 39.6 v3.2"/>
  <path d="M590.4 49 h9 v6 h-9z M594.9 49 v6 M590.4 52 h9"/>
</g>
<rect x="573" y="44.8" width="7.4" height="2" fill="#a9c6e8"/>
<path d="M566.4 45.8 l2.4 -2 v4z" fill="#3d7fc4"/>
<rect x="568.5" y="45.2" width="2" height="1.2" fill="#3d7fc4"/>
<rect x="593.2" y="44.4" width="7" height="3" fill="#a9c6e8" stroke="#999" stroke-width="0.6"/>
<path d="M599.5 42.8 l7.4 7.4 M606.9 42.8 l-7.4 7.4" stroke="#e15a2e" stroke-width="1.3"/>
<g>
  <path d="M615.4 40.6 h13 M615.4 40.6 l1.6 -1.2 M615.4 40.6 l1.6 1.2 M628.4 40.6 l-1.6 -1.2 M628.4 40.6 l-1.6 1.2" stroke="#3d7fc4" stroke-width="0.9" fill="none"/>
  <rect x="615.2" y="42.6" width="15.8" height="11.2" fill="#fff" stroke="#777" stroke-width="0.8"/>
  <path d="M615.2 45 h15.8 M615.2 50.6 h15.8 M619.2 42.6 v11.2 M623.6 42.6 v11.2 M627.6 42.6 v11.2" stroke="#aaa" stroke-width="0.6" fill="none"/>
  <rect x="619.2" y="45.2" width="4.4" height="5.2" fill="#3d7fc4"/>
  <rect x="616" y="53.2" width="14" height="1" fill="#999"/>
</g>
<path d="M571.8 72.1 h3 l-1.5 1.6z M596.6 72.1 h3 l-1.5 1.6z M621.6 72.1 h3 l-1.5 1.6z" fill="#555"/>
<!-- ===== Editing ===== -->
<path d="M652.2 39 h-8.8 l4.4 4.3 l-4.4 4.3 h8.8" fill="none" stroke="#444" stroke-width="1.1"/>
<path d="M689.2 42.7 h3 l-1.5 1.6z M665.0 55.8 h3 l-1.5 1.6z M671.8 69.8 h3 l-1.5 1.6z M714.0 72.8 h3 l-1.5 1.6z M741.1 72.8 h3 l-1.5 1.6z" fill="#555"/>
<rect x="643.3" y="52.4" width="8.4" height="7.8" fill="#fff" stroke="#888" stroke-width="0.8"/>
<rect x="643.3" y="52.4" width="8.4" height="1.2" fill="#777"/>
<path d="M647.5 54.5 v4 M645.9 57 l1.6 1.6 l1.6 -1.6" stroke="#3d7fc4" stroke-width="0.9" fill="none"/>
<path d="M644 70.4 l4.6 -4.4 l3 3 l-4.4 4.4 h-1.6z" fill="#e8788a"/>
<rect x="646" y="73.4" width="6.4" height="0.7" fill="#888"/>
<text x="698.4" y="45" font-size="8.8" fill="#3d7fc4" font-family="Liberation Sans">A</text>
<text x="698.8" y="53.8" font-size="8.8" fill="#8e44c4" font-family="Liberation Sans">Z</text>
<path d="M705.6 44.2 h10.6 l-4 4.2 v4.6 l-2.4 -1.4 v-3.2z" fill="#6d6d6d"/>
<circle cx="735" cy="44" r="4.6" fill="none" stroke="#2e75b6" stroke-width="1.4"/>
<path d="M731.6 47.6 l-5.8 5.8" stroke="#2e75b6" stroke-width="1.9" stroke-linecap="round"/>
<path d="M789 85.2 l2.2 -2.2 l2.2 2.2" fill="none" stroke="#555" stroke-width="0.8"/>
<!-- ===== formula bar ===== -->
<path d="M54.8 101 h4.4 l-2.2 2.3z" fill="#555"/>
<g fill="#777"><rect x="71.1" y="99.6" width="0.9" height="0.9"/><rect x="71.1" y="102.1" width="0.9" height="0.9"/><rect x="71.1" y="104.6" width="0.9" height="0.9"/></g>
<path d="M88.8 100.2 l5.6 5.6 M94.4 100.2 l-5.6 5.6" stroke="#b4b4b4" stroke-width="0.8"/>
<path d="M108.8 103.2 l2.4 2.4 l5 -5.2" fill="none" stroke="#c4c4c4" stroke-width="0.9"/>
<text x="130" y="105.6" font-size="9" font-style="italic" fill="#444" font-family="Liberation Serif">f</text>
<text x="133.4" y="106" font-size="5.6" font-style="italic" fill="#444" font-family="Liberation Serif" font-weight="bold">x</text>
<path d="M790 101.6 l2.2 2.2 l2.2 -2.2" fill="none" stroke="#444" stroke-width="1"/>
<!-- select all triangle -->
<path d="M13 119.2 v6.6 h-6.8z" fill="#c6c6c6"/>
<!-- v scrollbar arrows -->
<path d="M791.8 123.6 h4 l-2 -2z" fill="#666"/>
<path d="M791.8 394.2 h4 l-2 2z" fill="#666"/>
<!-- h scrollbar -->
<rect x="703.6" y="403.6" width="0.7" height="8" fill="#c6c6c6"/>
<rect x="779" y="403.6" width="0.7" height="8" fill="#c6c6c6"/>
<path d="M701 405.4 v4 l-2.2 -2z" fill="#666"/>
<path d="M782.2 405.4 v4 l2.2 -2z" fill="#666"/>
<g fill="#999"><rect x="685.1" y="403.2" width="0.8" height="0.8"/><rect x="685.1" y="405.6" width="0.8" height="0.8"/><rect x="685.1" y="408" width="0.8" height="0.8"/><rect x="685.1" y="410.4" width="0.8" height="0.8"/></g>
<!-- sheet nav -->
<path d="M18 404.6 v4.6 l-2.4 -2.3z" fill="#bdbdbd"/>
<path d="M33.4 404.6 v4.6 l2.4 -2.3z" fill="#bdbdbd"/>
<!-- plus -->
<circle cx="492.2" cy="407.2" r="4.6" fill="none" stroke="#666" stroke-width="0.9"/>
<path d="M489.6 407.2 h5.2 M492.2 404.6 v5.2" stroke="#666" stroke-width="0.9"/>
<!-- ===== status bar ===== -->
<g fill="none" stroke="#777" stroke-width="0.8">
  <path d="M633.4 418.2 h7.4 v7 h-7.4z M635.8 418.2 v7 M638.4 418.2 v7 M633.4 421.6 h7.4" />
  <path d="M656.2 418.4 h7.4 v6.8 h-7.4z" />
  <path d="M678.4 418.4 h8 v6.8 h-8z M681 418.4 v3.6 h2.8 v-3.6" />
</g>
<path d="M657.6 419.2 h4.6 l-1 2.4 v1.4 h-2.6 v-1.4z" fill="#888"/>
<rect x="696" y="421" width="3.4" height="1.2" fill="#666"/>
<path d="M764.6 421.6 h3.6 M766.4 419.8 v3.6" stroke="#666" stroke-width="1.1"/>
<!-- macro icon -->
<g fill="none" stroke="#888" stroke-width="0.8">
  <path d="M35 418.6 h7 v6.8 h-7z M35 420.6 h7 M38.4 420.6 v4.8 M35 423 h7"/>
</g>
<circle cx="35.4" cy="418.4" r="1.2" fill="#888"/>
<!-- ===== taskbar ===== -->
<g fill="#fff">
  <path d="M8.9 435.8 l4.3 -0.7 v4.4 h-4.3z"/>
  <path d="M13.9 435 l5.1 -0.8 v5.3 h-5.1z"/>
  <path d="M8.9 440.2 h4.3 v4.4 l-4.3 -0.6z"/>
  <path d="M13.9 440.2 h5.1 v5.3 l-5.1 -0.8z"/>
</g>
<circle cx="44" cy="438.9" r="3.3" fill="none" stroke="#fff" stroke-width="0.9"/>
<path d="M41.7 441.3 l-4 4" stroke="#fff" stroke-width="0.9"/>
<g fill="none" stroke="#fff" stroke-width="0.8">
  <rect x="66.6" y="436.6" width="6.4" height="7.4"/>
  <path d="M65.2 437.8 h-0.9 v5 h0.9 M74.4 437.8 h0.9 v5 h-0.9"/>
</g>
<!-- explorer -->
<path d="M94 436.2 h4.4 l1 1 h7.6 v8.2 h-13z" fill="#f6d67a"/>
<rect x="94" y="438.4" width="13" height="7" fill="#fbe39b"/>
<path d="M97.6 441.2 h6.6 v4.4 h-1.6 v-2.6 h-3.4 v2.6 h-1.6z" fill="#3aa0e4"/>
<!-- chrome -->
<g>
  <circle cx="129.2" cy="440" r="6.4" fill="#de4b3b"/>
  <path d="M129.2 440 L123.66 436.8 A6.4 6.4 0 0 0 129.2 446.4 L132.4 440.8z" fill="#2fa44f"/>
  <path d="M129.2 440 L135.6 440 A6.4 6.4 0 0 1 129.2 446.4 L132.4 440.8z" fill="#fbc02d"/>
  <path d="M129.2 440 L135.6 440 A6.4 6.4 0 0 0 129.2 433.6 z" fill="#de4b3b"/>
  <circle cx="129.2" cy="440" r="3" fill="#fff"/>
  <circle cx="129.2" cy="440" r="2.3" fill="#4b8bf4"/>
</g>
<!-- notepad-ish -->
<path d="M154.6 434.4 h9 l1 1 v10.6 l-3 0.4 l-10.4 -3.4 z" fill="#9ed3e0"/>
<path d="M155 434.4 h8.6 l-6.6 9.6 l-5.6 -1.6z" fill="#c9ecf2"/>
<path d="M163.6 434.8 l1 0.8 v10.4 l-0.9 0.3z" fill="#c98a4a"/>
<!-- excel -->
<rect x="186" y="435.2" width="7.6" height="10.6" fill="#e6f2ea"/>
<path d="M187.4 435.2 v10.6 M190.2 435.2 v10.6 M186 438 h7.6 M186 440.6 h7.6 M186 443.2 h7.6" stroke="#2a8a52" stroke-width="0.6"/>
<path d="M180 435.6 l8.2 -1.3 v13 l-8.2 -1.3z" fill="#1e7145"/>
<path d="M182 437.8 l3.6 5.4 M185.6 437.8 l-3.6 5.4" stroke="#fff" stroke-width="1.2"/>
<!-- indicators -->
<rect x="89" y="451" width="23" height="1" fill="#9cc3e6"/>
<rect x="118" y="451" width="23" height="1" fill="#9cc3e6"/>
<rect x="146" y="451" width="24" height="1" fill="#9cc3e6"/>
<rect x="173" y="451" width="28" height="1" fill="#bcd8f0"/>
<!-- tray -->
<path d="M638.3 441 l3.4 -3.4 l3.4 3.4" fill="none" stroke="#fff" stroke-width="0.9"/>
<path d="M651.2 437.6 h1.6 v1.2 h1 v3.2 h-1 v1.2 h-1.6z" fill="#fff"/>
<rect x="653.8" y="438.6" width="6.2" height="3.6" fill="#fff"/>
<rect x="660" y="439.4" width="0.9" height="2" fill="#fff"/>
<path d="M665.4 438.8 h1.4 l2.4 -2 v7.2 l-2.4 -2 h-1.4z" fill="none" stroke="#fff" stroke-width="0.8"/>
<path d="M670.4 438.4 a2.8 2.8 0 0 1 0 4.2 M672.2 437.4 a4.4 4.4 0 0 1 0 6.2 M673.9 436.6 a6 6 0 0 1 0 7.8" fill="none" stroke="#fff" stroke-width="0.6"/>
<g fill="none" stroke="#fff" stroke-width="0.8">
  <rect x="681.2" y="437.2" width="7.6" height="5.2"/>
  <path d="M684.9 442.4 v1.6 M683.2 444.2 h3.4"/>
</g>
<g fill="#fff"><rect x="679.2" y="436.4" width="1.2" height="1.2"/><rect x="679.2" y="438.4" width="1.2" height="2"/></g>
<g fill="none" stroke="#fff" stroke-width="0.8">
  <rect x="693.8" y="436.6" width="13" height="6.6"/>
</g>
<g fill="#fff">
  <rect x="695.6" y="438.4" width="9.4" height="0.8" opacity="0.8"/>
  <rect x="697" y="440.8" width="6.6" height="0.9"/>
</g>
<path d="M776 436 h8.8 v6.6 h-1.6 v2.2 l-2.4 -2.2 h-4.8z" fill="#fff"/>
<g stroke="#0f3959" stroke-width="0.7"><path d="M777.6 437.8 h5.6 M777.6 439.4 h5.6 M777.6 441 h4"/></g>
<rect x="797" y="428" width="0.7" height="24" fill="#4a6a88"/>
<!-- ===== red annotation loop ===== -->
<path d="M431 416.8 C424 416.6 416 416.4 409.5 416 C401 414.8 395.6 409.5 395.3 402.5 C395 395 401.5 388.5 410.5 387.9 C424 387 440 388.4 450 392.8 C460 397.5 471 405 471.2 412.2 C471.4 419 462 421.2 447 421.6 C432 422 418 420.6 409 417.4" fill="none" stroke="#f51414" stroke-width="1.4" stroke-linecap="round"/>

</svg>
</body></html>
